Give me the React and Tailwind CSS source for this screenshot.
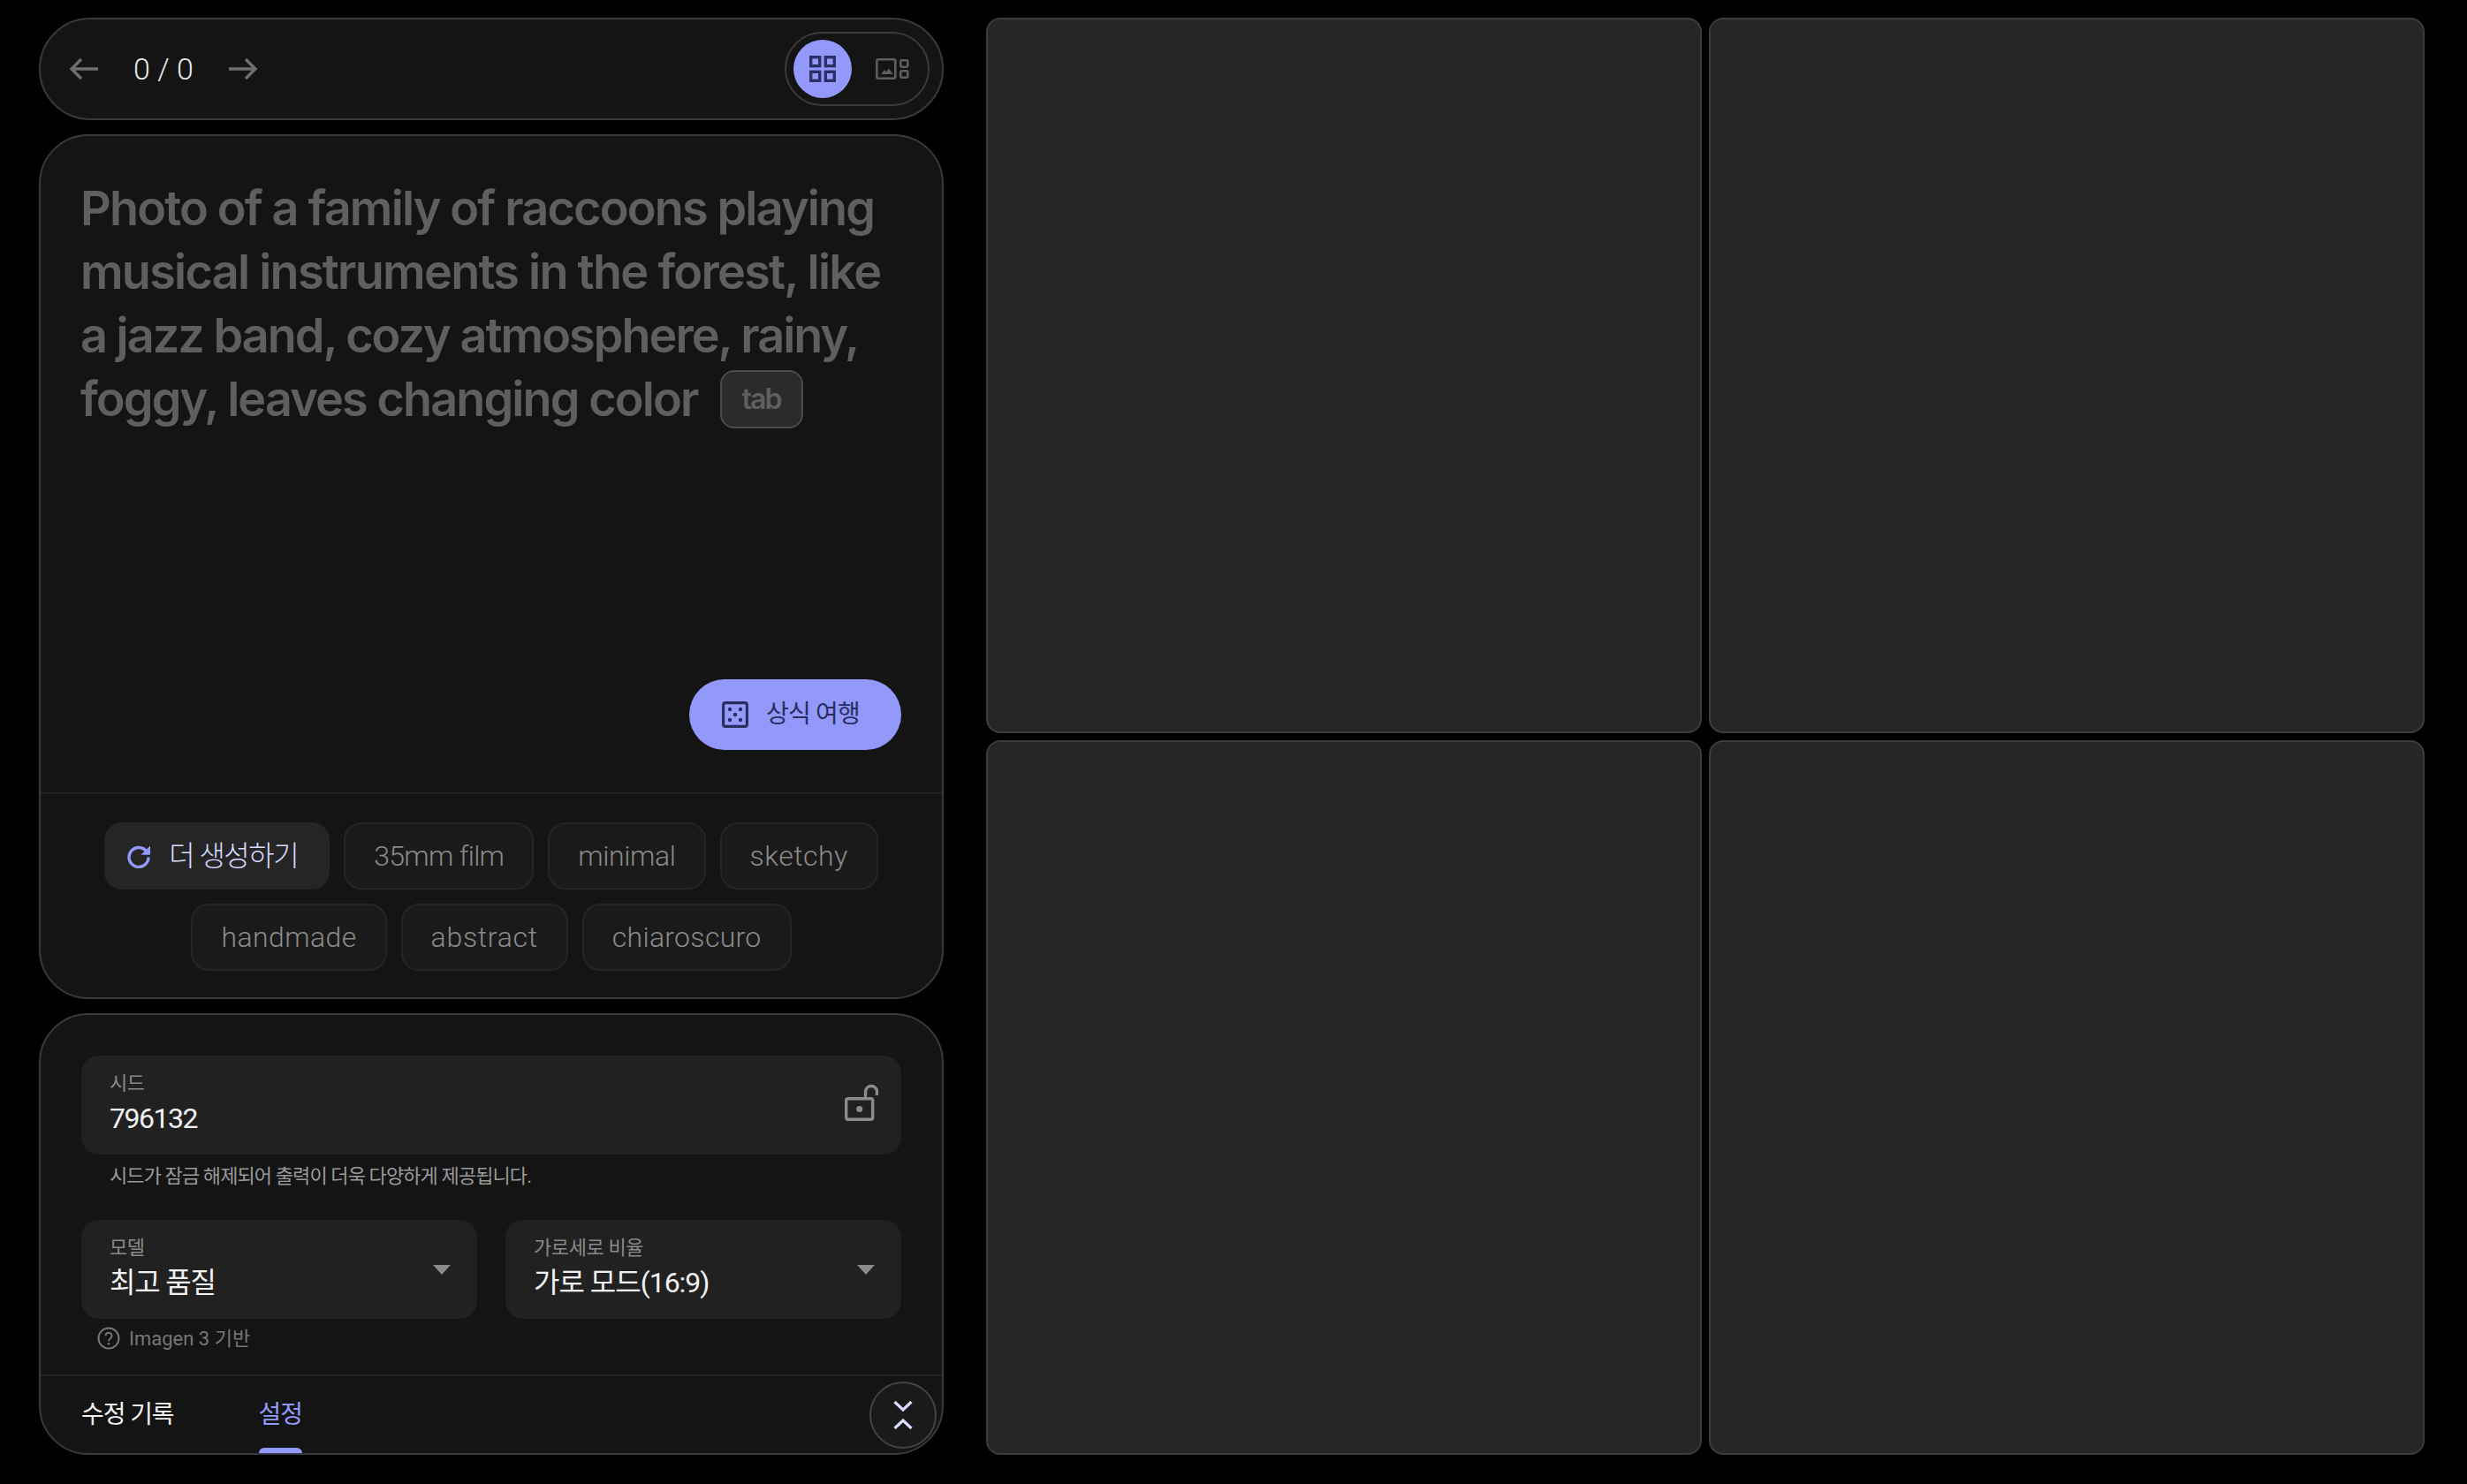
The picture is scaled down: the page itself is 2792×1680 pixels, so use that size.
const sans = "font-['Roboto','Noto_Sans_CJK_KR',sans-serif]";

function GridIcon() {
  return (
    <svg width="30" height="30" viewBox="0 0 30 30" fill="none" stroke="#2c3067" strokeWidth="3.4">
      <rect x="1.7" y="1.7" width="10" height="10" />
      <rect x="18.3" y="1.7" width="10" height="10" />
      <rect x="1.7" y="18.3" width="10" height="10" />
      <rect x="18.3" y="18.3" width="10" height="10" />
    </svg>
  );
}

function ImageGridIcon() {
  return (
    <svg width="38" height="24" viewBox="0 0 38 24" fill="none" stroke="#5e5e5e" strokeWidth="2.6">
      <rect x="1.3" y="1.3" width="21" height="21.4" rx="2" />
      <rect x="28.3" y="2.3" width="8" height="7.4" rx="1.4" />
      <rect x="28.3" y="14.3" width="8" height="7.4" rx="1.4" />
      <path d="M6 18l4-5 2.4 2.6 2.4-4 5 6.4z" fill="#5e5e5e" stroke="none" />
    </svg>
  );
}

function Dice() {
  return (
    <svg width="30" height="30" viewBox="0 0 30 30" fill="none">
      <rect x="1.6" y="1.6" width="26.8" height="26.8" rx="2.5" stroke="#2a2e5e" strokeWidth="3.2" />
      <circle cx="9" cy="9" r="2.2" fill="#2a2e5e" />
      <circle cx="21" cy="9" r="2.2" fill="#2a2e5e" />
      <circle cx="15" cy="15" r="2.2" fill="#2a2e5e" />
      <circle cx="9" cy="21" r="2.2" fill="#2a2e5e" />
      <circle cx="21" cy="21" r="2.2" fill="#2a2e5e" />
    </svg>
  );
}

function Refresh() {
  return (
    <svg width="28" height="28" viewBox="0 0 28 28" fill="none">
      <path d="M23.2 9.4A11 11 0 1 0 25 15.5" stroke="#9399fb" strokeWidth="3.4" />
      <path d="M27 2.4v10.4H16.6z" fill="#9399fb" />
    </svg>
  );
}

function LockOpen() {
  return (
    <svg width="38" height="42" viewBox="0 0 38 42" fill="none" stroke="#8b8b8b" strokeWidth="3.4">
      <rect x="1.7" y="16.7" width="30" height="23.6" rx="2" />
      <path d="M23.5 16V9a6.5 6.5 0 0 1 13 0v4" />
      <circle cx="16.7" cy="28.5" r="3.6" fill="#8b8b8b" stroke="none" />
    </svg>
  );
}

function Arrow({ right }) {
  return (
    <svg width="33" height="28" viewBox="0 0 33 28" fill="none" stroke="#6f6f6f" strokeWidth="3.4">
      {right ? <path d="M0 14h30M19 3l11 11-11 11" /> : <path d="M33 14H3M14 3 3 14l11 11" />}
    </svg>
  );
}

function Chip({ children, tracking }) {
  return (
    <div className={"h-[76px] px-[32px] flex items-center rounded-[20px] border-2 border-[#252525] bg-[#1a1a1a] text-[32px] font-light text-[#8a8a8a] " + tracking}>
      {children}
    </div>
  );
}

function Field({ label, value, className, right, valueClass }) {
  return (
    <div className={"h-[112px] rounded-[20px] bg-[#212121] pl-[32px] pr-[26px] pb-[7px] flex items-center justify-between " + className}>
      <div className="flex flex-col">
        <span className="text-[22px] leading-[28px] text-[#8a8a8a] tracking-[-0.4px]">{label}</span>
        <span className={"leading-[40px] text-[#f1f1f1] mt-[5px] -mb-[3px] " + valueClass}>{value}</span>
      </div>
      {right}
    </div>
  );
}

const Caret = (
  <svg width="20" height="11" viewBox="0 0 20 11" className="mr-[4px] mt-[7px]"><path d="M0 0h20L10 11z" fill="#8a8a8a" /></svg>
);

export default function App() {
  return (
    <div className={"w-[2792px] h-[1680px] bg-black flex pl-[44px] pr-[48px] pt-[20px] pb-[33px] gap-[48px] " + sans}>
      <div className="w-[1024px] shrink-0 flex flex-col gap-[16px]">
        <div className="h-[116px] rounded-[58px] border-2 border-[#3a3a3a] bg-[#141414] flex items-center pl-[32px] pr-[14px]">
          <Arrow />
          <span className="ml-[40px] mr-[40px] text-[34px] text-[#e8e8e8] font-light">0 / 0</span>
          <Arrow right />
          <div className="ml-auto w-[164px] h-[84px] rounded-[42px] border-2 border-[#3a3a3a] flex items-center pl-[8px]">
            <div className="w-[66px] h-[66px] rounded-full bg-[#9399fb] flex items-center justify-center">
              <GridIcon />
            </div>
            <div className="ml-[27px] flex"><ImageGridIcon /></div>
          </div>
        </div>

        <div className="flex-1 rounded-[56px] border-2 border-[#3a3a3a] bg-[#141414] flex flex-col">
          <div className="flex-1 flex flex-col pl-[45px] pr-[46px] pt-[46px] pb-[48px]">
            <div className="flex-1 font-['Inter','Noto_Sans_CJK_KR',sans-serif] text-[54px] leading-[72px] font-semibold text-[#5f5f5f] whitespace-nowrap">
              <div className="tracking-[-1.85px]">Photo of a family of raccoons playing</div>
              <div className="tracking-[-1.75px]">musical instruments in the forest, like</div>
              <div className="tracking-[-2px]">a jazz band, cozy atmosphere, rainy,</div>
              <div className="flex items-center tracking-[-1.9px]">
                <span>foggy, leaves changing color</span>
                <span className="ml-[25px] w-[94px] h-[66px] flex items-center justify-center rounded-[16px] border-2 border-[#4a4a4a] bg-[#2a2b2c] text-[32px] leading-[40px] tracking-[-2px]">tab</span>
              </div>
            </div>
            <div className="self-end w-[240px] h-[80px] pr-[10px] rounded-[40px] bg-[#9399fb] flex items-center justify-center gap-[20px]">
              <Dice />
              <span className="text-[28px] text-[#2a2e5e] tracking-[-0.8px]">상식 여행</span>
            </div>
          </div>
          <div className="border-t-2 border-[#242424] pt-[32px] pb-[30px] flex flex-wrap justify-center gap-[16px] px-[30px]">
            <div className="h-[76px] pl-[25px] pr-[36px] flex items-center gap-[20px] rounded-[20px] bg-[#252525] text-[32px] tracking-[-1.5px] text-[#d8dbff] font-light">
              <Refresh />
              <span>더 생성하기</span>
            </div>
            <Chip tracking="tracking-[-0.7px]">35mm film</Chip>
            <Chip tracking="tracking-[-0.4px]">minimal</Chip>
            <Chip tracking="tracking-[0.5px]">sketchy</Chip>
            <Chip tracking="tracking-[0.4px]">handmade</Chip>
            <Chip tracking="tracking-[0.7px]">abstract</Chip>
            <Chip tracking="tracking-[0.3px]">chiaroscuro</Chip>
          </div>
        </div>

        <div className="h-[500px] shrink-0 rounded-[56px] border-2 border-[#3a3a3a] bg-[#141414] flex flex-col overflow-hidden">
          <div className="px-[46px] pt-[46px]">
            <Field label="시드" value="796132" valueClass="text-[32px] tracking-[-1.5px]" right={<LockOpen />} />
            <p className="pl-[32px] mt-[12px] text-[22px] leading-[26px] text-[#9a9a9a] tracking-[-0.9px]">시드가 잠금 해제되어 출력이 더욱 다양하게 제공됩니다.</p>
            <div className="grid grid-cols-2 gap-[32px] mt-[36px]">
              <Field label="모델" value="최고 품질" valueClass="text-[32px] tracking-[-1.2px]" right={Caret} />
              <Field label="가로세로 비율" value="가로 모드(16:9)" valueClass="text-[32px] tracking-[-1px]" right={Caret} />
            </div>
            <div className="flex items-center gap-[10px] pl-[18px] mt-[8px] h-[28px]">
              <svg width="26" height="26" viewBox="0 0 26 26" fill="none" stroke="#777777" strokeWidth="2">
                <circle cx="13" cy="13" r="11.5" />
                <path d="M9.5 10.2a3.5 3.5 0 1 1 5.6 2.8c-1.3 1-2.1 1.6-2.1 3.2" />
                <circle cx="13" cy="19.3" r="1.3" fill="#777777" stroke="none" />
              </svg>
              <span className="text-[22px] text-[#777777]">Imagen 3 기반</span>
            </div>
          </div>
          <div className="mt-[27px] flex-1 border-t-2 border-[#242424] flex pl-[46px] pr-[6px]">
            <span className="text-[28px] text-[#efefef] self-center tracking-[-1.1px] pt-[1px]">수정 기록</span>
            <div className="ml-[96px] flex flex-col items-center">
              <span className="flex-1 flex items-center pt-[6px] text-[28px] text-[#9399fb] tracking-[-1.1px]">설정</span>
              <span className="w-full h-[6px] rounded-t-[6px] bg-[#9399fb]" />
            </div>
            <div className="ml-auto my-auto w-[76px] h-[76px] rounded-full border-2 border-[#444444] bg-[#1a1a1a] flex items-center justify-center">
              <svg width="24" height="36" viewBox="0 0 24 36" fill="none" stroke="#d8dbff" strokeWidth="3.2">
                <path d="M2.5 3 12 12l9.5-9M2.5 33 12 24l9.5 9" />
              </svg>
            </div>
          </div>
        </div>
      </div>

      <div className="w-[1628px] grid grid-cols-2 grid-rows-2 gap-[8px]">
        <div className="rounded-[16px] border-2 border-[#3c3c3c] bg-[#262626]" />
        <div className="rounded-[16px] border-2 border-[#3c3c3c] bg-[#262626]" />
        <div className="rounded-[16px] border-2 border-[#3c3c3c] bg-[#262626]" />
        <div className="rounded-[16px] border-2 border-[#3c3c3c] bg-[#262626]" />
      </div>
    </div>
  );
}
